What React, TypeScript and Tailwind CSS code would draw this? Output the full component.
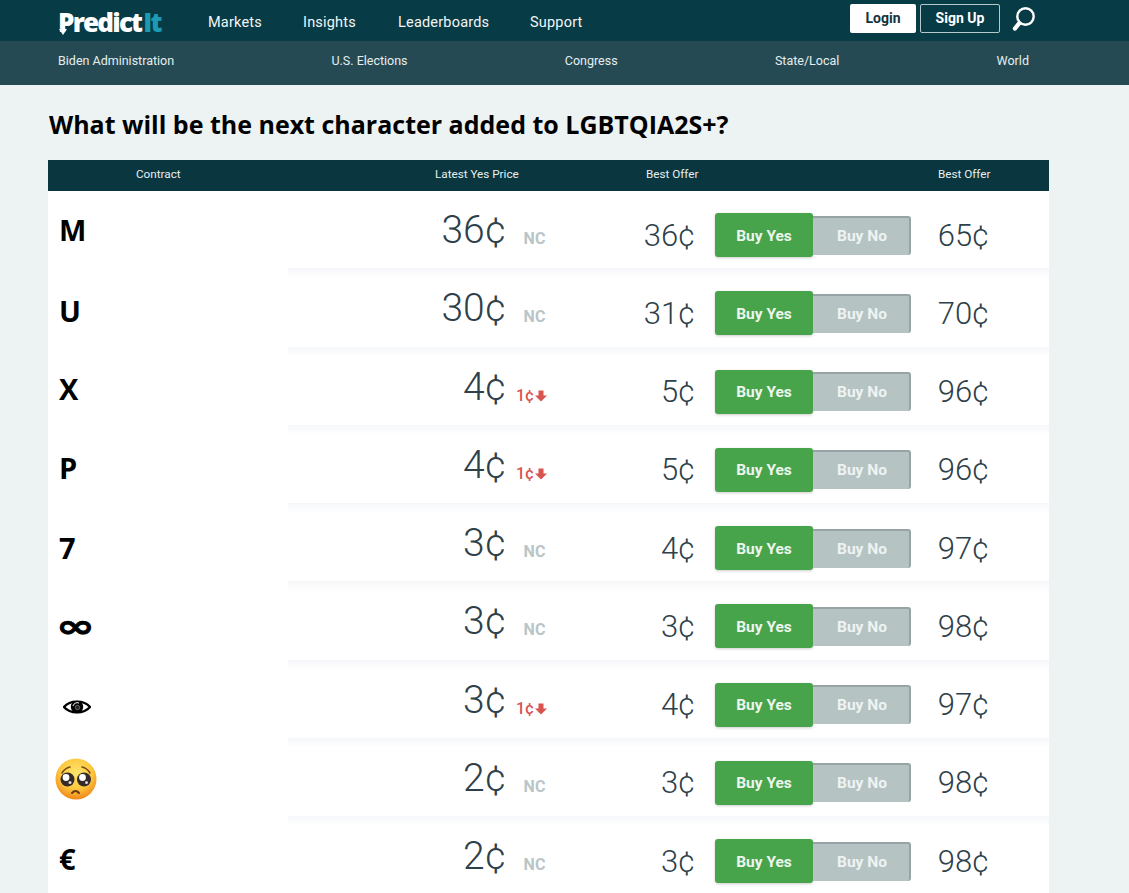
// One row of the contract table
interface Contract {
  label: string;
  labelPad: string;
  latest: string;
  change: string | null;
  yes: string;
  no: string;
}

const contracts: Contract[] = [
  { label: 'M', labelPad: 'pb-[11px]', latest: '36¢', change: null, yes: '36¢', no: '65¢' },
  { label: 'U', labelPad: 'pb-[6px]', latest: '30¢', change: null, yes: '31¢', no: '70¢' },
  { label: 'X', labelPad: 'pb-[7px]', latest: '4¢', change: '1¢', yes: '5¢', no: '96¢' },
  { label: 'P', labelPad: 'pb-[5px]', latest: '4¢', change: '1¢', yes: '5¢', no: '96¢' },
  { label: '7', labelPad: 'pb-[1px]', latest: '3¢', change: null, yes: '4¢', no: '97¢' },
  { label: '∞', labelPad: 'pb-[1px]', latest: '3¢', change: null, yes: '3¢', no: '98¢' },
  { label: 'eye', labelPad: 'pt-[5px]', latest: '3¢', change: '1¢', yes: '4¢', no: '97¢' },
  { label: 'pleading', labelPad: 'pb-[7px]', latest: '2¢', change: null, yes: '3¢', no: '98¢' },
  { label: '€', labelPad: 'pb-[5px]', latest: '2¢', change: null, yes: '3¢', no: '98¢' },
];

const markets = ['Biden Administration', 'U.S. Elections', 'Congress', 'State/Local', 'World'];

function EyeIcon() {
  return (
    <svg width="28" height="16" viewBox="0 0 28 16" className="ml-[3px]">
      <path d="M1 8 C7 0.8 21 0.8 27 8 C21 15.2 7 15.2 1 8 Z" fill="#fff" stroke="#000" strokeWidth="2.4" />
      <circle cx="14" cy="8" r="6.2" fill="#000" />
      <path d="M10 7 A4.5 4.5 0 0 1 16 4" fill="none" stroke="#fff" strokeWidth="1" />
      <circle cx="14.5" cy="8.5" r="2.2" fill="#222" stroke="#888" strokeWidth="0.7" />
    </svg>
  );
}

function PleadingFace() {
  return (
    <svg width="42" height="42" viewBox="0 0 42 42" className="-ml-[5px]">
      <defs>
        <radialGradient id="face" cx="50%" cy="35%" r="65%">
          <stop offset="0%" stopColor="#ffe46c" />
          <stop offset="60%" stopColor="#fdc83f" />
          <stop offset="100%" stopColor="#f0861a" />
        </radialGradient>
      </defs>
      <circle cx="21" cy="21" r="20.5" fill="url(#face)" />
      <path d="M7 15 Q10 10 15 9" fill="none" stroke="#7a4a12" strokeWidth="1.6" strokeLinecap="round" />
      <path d="M35 15 Q32 10 27 9" fill="none" stroke="#7a4a12" strokeWidth="1.6" strokeLinecap="round" />
      <circle cx="12.5" cy="21.5" r="7" fill="#362a28" />
      <circle cx="29" cy="21.5" r="7" fill="#362a28" />
      <circle cx="11" cy="19.5" r="3.4" fill="#fff" />
      <circle cx="27.5" cy="19.5" r="3.4" fill="#fff" />
      <circle cx="15" cy="24.5" r="1.5" fill="#d8d8e0" />
      <circle cx="31.5" cy="24.5" r="1.5" fill="#d8d8e0" />
      <path d="M17 35 Q20.5 31 24 35" fill="none" stroke="#6b3a14" strokeWidth="2" strokeLinecap="round" />
    </svg>
  );
}

function Label({ value }: { value: string }) {
  if (value === 'eye') return <EyeIcon />;
  if (value === 'pleading') return <PleadingFace />;
  if (value === '∞') {
    return (
      <span className="-ml-[3px] inline-block origin-center scale-x-[1.06] scale-y-[0.72] font-['DejaVu_Sans'] text-[44px] font-bold leading-none [-webkit-text-stroke:1px_black]">
        ∞
      </span>
    );
  }
  return <span className="-ml-[1px] font-['Open_Sans'] font-bold text-[29px] leading-none">{value}</span>;
}

function ContractRow({ contract, index }: { contract: Contract; index: number }) {
  return (
    <div className="relative flex h-[78.25px] items-center">
      <div className={`flex h-full w-[240px] items-center pl-[12px] text-black ${contract.labelPad}`}>
        <Label value={contract.label} />
      </div>
      <div className="w-[218px] pb-[9px] text-right font-['Roboto'] font-light text-[39px] leading-none text-[#2e4049]">
        {contract.latest}
      </div>
      <div className="flex w-[59px] justify-center pt-[8px] pr-[2px] font-['Roboto'] text-[16px] font-bold">
        {contract.change ? (
          <span className="-ml-[6px] flex items-center font-medium text-[#d9534f]">
            {contract.change}
            <svg width="12" height="12" viewBox="0 0 12 12" className="ml-[1px]">
              <path d="M3.5 0.5 H8.5 V5.5 H12 L6 11.5 L0 5.5 H3.5 Z" fill="#d9534f" />
            </svg>
          </span>
        ) : (
          <span className="text-[#b9c5c6]">NC</span>
        )}
      </div>
      <div className="w-[130px] text-right font-['Roboto'] font-light text-[31px] leading-none text-[#2e4049]">
        {contract.yes}
      </div>
      <div className="ml-[20px] flex items-center">
        <button className="h-[44px] w-[98px] rounded-[3px] bg-[#47a44b] pt-[2px] font-['Roboto'] text-[15.5px] font-bold text-[#eef5ee] shadow-[0_1px_3px_rgba(0,0,0,0.2)]">
          Buy Yes
        </button>
        <button className="h-[39px] w-[98px] rounded-r-[3px] border-t-2 border-r-2 border-[#97a3a4] bg-[#b6c3c3] pl-[2px] font-['Roboto'] text-[15.5px] font-bold text-[#eef3f3]">
          Buy No
        </button>
      </div>
      <div className="w-[78px] text-right font-['Roboto'] font-light text-[31px] leading-none text-[#2e4049]">
        {contract.no}
      </div>
      {index < contracts.length - 1 && (
        <div className="absolute -bottom-[4px] left-[240px] right-0 h-[10px] bg-gradient-to-b from-[#f6f7fa] to-white" />
      )}
    </div>
  );
}

export default function App() {
  return (
    <div className="h-[893px] w-[1129px] overflow-hidden bg-[#edf2f2] font-['Roboto']">
      <header className="flex h-[41px] items-center bg-[#073b45] pl-[58px] text-white">
        <div className="relative flex w-[150px] items-baseline pt-[2px] font-['Open_Sans'] text-[26px] font-extrabold leading-none tracking-[-1.8px]">
          <span>Predict</span>
          <span className="ml-[2px] text-[#1b9bb5]">It</span>
          <svg width="8" height="11" viewBox="0 0 8 11" className="absolute left-[1px] top-[17px]">
            <path d="M2 0 H6 V5 H8 L4 11 L0 5 H2 Z" fill="#fff" />
          </svg>
        </div>
        <nav className="flex items-center pt-[5px] text-[14.5px] tracking-[0.2px] text-[#f2f6f6]">
          <a className="w-[95px]">Markets</a>
          <a className="w-[95px]">Insights</a>
          <a className="w-[132px]">Leaderboards</a>
          <a>Support</a>
        </nav>
        <div className="ml-auto flex items-center pr-[93px] pb-[5px]">
          <button className="h-[29px] w-[66px] rounded-[2px] bg-white text-[14px] font-bold text-[#12343c]">Login</button>
          <button className="ml-[4px] h-[29px] w-[80px] rounded-[2px] border border-[#b5c8cb] text-[14px] font-bold text-white">
            Sign Up
          </button>
          <svg width="24" height="28" viewBox="0 0 24 28" className="ml-[12px] mt-[3px]">
            <circle cx="13.5" cy="10.5" r="8.2" fill="none" stroke="#fff" strokeWidth="2.4" />
            <path d="M7 17.5 L3 22.5" stroke="#fff" strokeWidth="4.4" strokeLinecap="round" />
          </svg>
        </div>
      </header>
      <div className="flex h-[44px] items-center justify-between bg-[#254a54] pl-[58px] pr-[100px] pb-[4px] text-[12.5px] text-[#e6eeee]">
        {markets.map((m) => (
          <span key={m}>{m}</span>
        ))}
      </div>
      <h1 className="ml-[49px] mt-[20px] font-['Open_Sans'] text-[25px] font-bold leading-[38px] text-black">
        What will be the next character added to LGBTQIA2S+?
      </h1>
      <div className="ml-[48px] mt-[17px] w-[1001px]">
        <div className="flex h-[31px] items-center bg-[#0a3640] pb-[2px] text-[11.7px] text-[#e8efef]">
          <span className="ml-[88px] w-[299px]">Contract</span>
          <span className="w-[211px]">Latest Yes Price</span>
          <span className="w-[292px]">Best Offer</span>
          <span>Best Offer</span>
        </div>
        <div className="bg-white pt-[5px]">
          {contracts.map((c, i) => (
            <ContractRow key={i} contract={c} index={i} />
          ))}
        </div>
      </div>
    </div>
  );
}
